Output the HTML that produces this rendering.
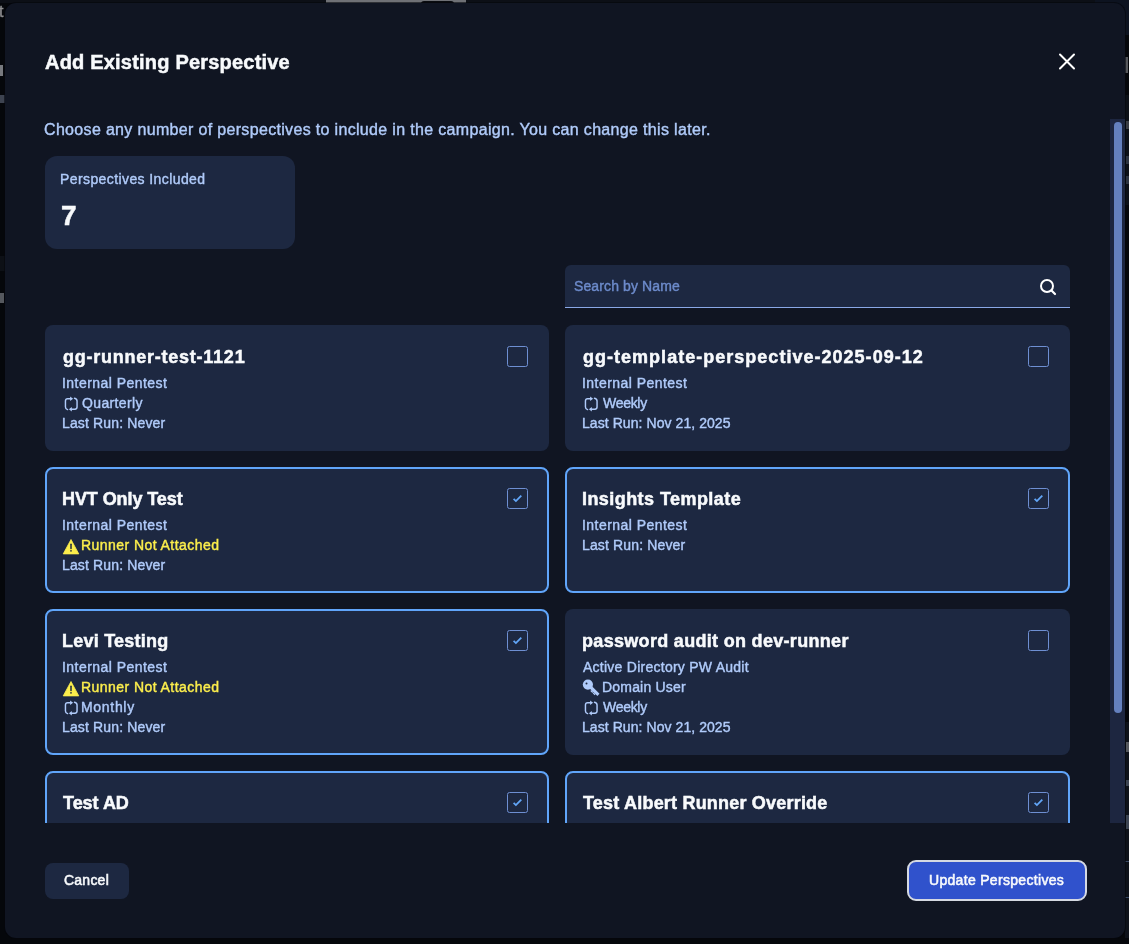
<!DOCTYPE html>
<html><head><meta charset="utf-8">
<style>
html,body{margin:0;padding:0;width:1129px;height:944px;overflow:hidden;background:#0b0e15;}
body{position:relative;font-family:"Liberation Sans",sans-serif;}
.t{position:absolute;white-space:nowrap;will-change:transform;}
.ic{position:absolute;overflow:visible;}
.modal{position:absolute;left:5px;top:3px;width:1120px;height:935px;background:#101522;border-radius:11px;box-shadow:0 0 0 1px rgba(5,7,11,0.6);overflow:hidden;}
.scroll{position:absolute;left:0;top:116px;width:1105px;height:704px;overflow:hidden;}
.inner{position:absolute;left:0;top:-116px;width:1120px;height:944px;}
.card{position:absolute;left:0;width:504.5px;background:#1d2841;border-radius:8px;box-sizing:border-box;}
.card.sel{border:2px solid #60a5fa;}
.cb{position:absolute;width:21px;height:21px;box-sizing:border-box;border:1.5px solid #6e8fd2;border-radius:2.5px;}
</style></head><body>
<div style="position:absolute;left:0;top:0;width:1129px;height:944px;background:#05070b;"></div>
<div style="position:absolute;left:0;top:0;width:1129px;height:3px;background:#0c0f16;"></div>
<div style="position:absolute;left:326px;top:0;width:140px;height:3px;background:#6f7176;border-radius:0 0 0 0;"></div>
<div style="position:absolute;left:421px;top:1px;width:33px;height:3px;background:#0a0c10;border-radius:6px 6px 0 0;"></div>

<div style="position:absolute;left:-1px;top:2px;font-family:'Liberation Sans',sans-serif;font-size:16px;line-height:20px;color:#8d8d8f;will-change:transform;-webkit-text-stroke:0.4px #8d8d8f">t</div>
<div style="position:absolute;left:0;top:65px;width:3px;height:11px;background:#77797e;"></div>
<div style="position:absolute;left:0;top:95px;width:5px;height:8px;background:#3d4350;"></div>
<div style="position:absolute;left:0;top:256px;width:5px;height:15px;background:#0d1016;"></div>
<div style="position:absolute;left:0;top:293px;width:4px;height:10px;background:#55585e;"></div>
<div style="position:absolute;left:1095px;top:0;width:34px;height:35px;background:#0d1320;"></div>
<div style="position:absolute;left:1125px;top:57px;width:3px;height:16px;background:#55575c;"></div>
<div style="position:absolute;left:1125px;top:95px;width:4px;height:110px;background:#0c1017;"></div>
<div style="position:absolute;left:1126px;top:121px;width:3px;height:8px;background:#3a3d44;"></div>
<div style="position:absolute;left:1126px;top:156px;width:3px;height:8px;background:#2c3340;"></div>
<div style="position:absolute;left:1126px;top:176px;width:3px;height:8px;background:#2c3340;"></div>
<div style="position:absolute;left:1125px;top:722px;width:4px;height:216px;background:#0e121a;"></div>
<div style="position:absolute;left:1126px;top:742px;width:3px;height:10px;background:#55585e;"></div>
<div style="position:absolute;left:1126px;top:780px;width:3px;height:6px;background:#3c4452;"></div>
<div style="position:absolute;left:1126px;top:815px;width:3px;height:14px;background:#3c4452;"></div>
<div style="position:absolute;left:1125px;top:861px;width:4px;height:1px;background:#3a4a66;"></div>
<div style="position:absolute;left:1125px;top:897px;width:4px;height:1px;background:#3a4a66;"></div>

<div class="modal">
  <div class="modal-rel" style="position:absolute;left:-5px;top:-3px;width:1129px;height:944px;">
  <div class="t" id="t27" style="left:44.90px;top:49.87px;font-size:20px;line-height:25px;color:#f8fafc;font-weight:700;-webkit-text-stroke:0.5px #f8fafc;letter-spacing:0.203px;">Add Existing Perspective</div>
  <svg class="ic" style="left:1058px;top:53px" width="18" height="18" viewBox="0 0 18 18">
    <path d="M2 1.5 L16 15.5 M16 1.5 L2 15.5" stroke="#ffffff" stroke-width="2" stroke-linecap="round"/>
  </svg>
  <div style="position:absolute;left:0;top:119px;width:1105px;height:704px;overflow:hidden;">
   <div style="position:absolute;left:0;top:-119px;width:1129px;height:944px;">
  <div class="t" id="t28" style="left:44.14px;top:120.26px;font-size:16px;line-height:20px;color:#b0cbfa;-webkit-text-stroke:0.4px #b0cbfa;letter-spacing:0.329px;">Choose any number of perspectives to include in the campaign. You can change this later.</div>
  <div style="position:absolute;left:45px;top:156px;width:250px;height:92.5px;background:#1d2841;border-radius:12px;"></div>
  <div class="t" id="t29" style="left:60.19px;top:169.95px;font-size:14px;line-height:18px;color:#b0cbfa;-webkit-text-stroke:0.4px #b0cbfa;letter-spacing:0.406px;">Perspectives Included</div>
  <div class="t" id="t30" style="left:61.00px;top:198.10px;font-size:28px;line-height:35px;color:#f8fafc;font-weight:700;-webkit-text-stroke:0.5px #f8fafc;letter-spacing:0.000px;">7</div>
  <div style="position:absolute;left:565px;top:265px;width:505px;height:43px;background:#1d2841;border-radius:6px 6px 0 0;box-sizing:border-box;border-bottom:1.5px solid #8aa8e6;"></div>
  <div class="t" id="t31" style="left:574.25px;top:277.05px;font-size:14px;line-height:18px;color:#6d8bcb;-webkit-text-stroke:0.4px #6d8bcb;letter-spacing:0.120px;">Search by Name</div>
  <svg class="ic" style="left:1038px;top:277px" width="20" height="20" viewBox="0 0 20 20">
    <circle cx="9" cy="9" r="6" fill="none" stroke="#ffffff" stroke-width="2"/>
    <path d="M13.5 13.5 L17 17" stroke="#ffffff" stroke-width="2.2" stroke-linecap="round"/>
  </svg>
  <div class="card" style="left:45px;top:325px;height:126px;width:504.2px"></div>
<div class="t" id="t0" style="left:62.70px;top:345.76px;font-size:18px;line-height:22px;color:#f8fafc;font-weight:700;-webkit-text-stroke:0.5px #f8fafc;letter-spacing:0.756px;">gg-runner-test-1121</div>
<div class="cb" style="left:507px;top:346px"></div>
<div class="t" id="t1" style="left:61.64px;top:374.15px;font-size:14px;line-height:18px;color:#b0cbfa;-webkit-text-stroke:0.4px #b0cbfa;letter-spacing:0.460px;">Internal Pentest</div>
<svg class="ic" style="left:64.0px;top:396px" width="16" height="18" viewBox="0 0 16 18">
<path d="M6.6 2.75 H3.6 Q1.45 2.75 1.45 4.9 V10.9 Q1.45 12.9 3.6 13.6" fill="none" stroke="#b0cbfa" stroke-width="1.45" stroke-linecap="round"/>
<path d="M6.1 0.5 L9.1 2.75 L6.1 5 Z" fill="#b0cbfa"/>
<path d="M10.5 2.3 Q13.05 2.9 13.05 5.0 V11.1 Q13.05 13.2 10.9 13.2 H7.2" fill="none" stroke="#b0cbfa" stroke-width="1.45" stroke-linecap="round"/>
<path d="M7.8 11.0 L4.9 13.2 L7.8 15.4 Z" fill="#b0cbfa"/>
</svg>
<div class="t" id="t2" style="left:81.97px;top:394.15px;font-size:14px;line-height:18px;color:#b0cbfa;-webkit-text-stroke:0.4px #b0cbfa;letter-spacing:0.356px;">Quarterly</div>
<div class="t" id="t3" style="left:61.79px;top:414.15px;font-size:14px;line-height:18px;color:#b0cbfa;-webkit-text-stroke:0.4px #b0cbfa;letter-spacing:0.145px;">Last Run: Never</div>
<div class="card" style="left:565px;top:325px;height:126px;width:505px"></div>
<div class="t" id="t4" style="left:583.00px;top:345.76px;font-size:18px;line-height:22px;color:#f8fafc;font-weight:700;-webkit-text-stroke:0.5px #f8fafc;letter-spacing:1.019px;">gg-template-perspective-2025-09-12</div>
<div class="cb" style="left:1028px;top:346px"></div>
<div class="t" id="t5" style="left:581.94px;top:374.15px;font-size:14px;line-height:18px;color:#b0cbfa;-webkit-text-stroke:0.4px #b0cbfa;letter-spacing:0.460px;">Internal Pentest</div>
<svg class="ic" style="left:583.7px;top:396px" width="16" height="18" viewBox="0 0 16 18">
<path d="M6.6 2.75 H3.6 Q1.45 2.75 1.45 4.9 V10.9 Q1.45 12.9 3.6 13.6" fill="none" stroke="#b0cbfa" stroke-width="1.45" stroke-linecap="round"/>
<path d="M6.1 0.5 L9.1 2.75 L6.1 5 Z" fill="#b0cbfa"/>
<path d="M10.5 2.3 Q13.05 2.9 13.05 5.0 V11.1 Q13.05 13.2 10.9 13.2 H7.2" fill="none" stroke="#b0cbfa" stroke-width="1.45" stroke-linecap="round"/>
<path d="M7.8 11.0 L4.9 13.2 L7.8 15.4 Z" fill="#b0cbfa"/>
</svg>
<div class="t" id="t6" style="left:603.26px;top:394.15px;font-size:14px;line-height:18px;color:#b0cbfa;-webkit-text-stroke:0.4px #b0cbfa;letter-spacing:-0.297px;">Weekly</div>
<div class="t" id="t7" style="left:582.09px;top:414.15px;font-size:14px;line-height:18px;color:#b0cbfa;-webkit-text-stroke:0.4px #b0cbfa;letter-spacing:0.067px;">Last Run: Nov 21, 2025</div>
<div class="card sel" style="left:45px;top:467px;height:126px;width:504.2px"></div>
<div class="t" id="t8" style="left:61.76px;top:487.76px;font-size:18px;line-height:22px;color:#f8fafc;font-weight:700;-webkit-text-stroke:0.5px #f8fafc;letter-spacing:-0.081px;">HVT Only Test</div>
<div class="cb" style="left:507px;top:488px"></div><svg class="ic" style="left:507px;top:488px" width="21" height="21" viewBox="0 0 21 21">
<path d="M6.6 10.9 L8.9 13.1 L14.3 7.6" fill="none" stroke="#62a6f8" stroke-width="1.8"/></svg>
<div class="t" id="t9" style="left:61.64px;top:516.15px;font-size:14px;line-height:18px;color:#b0cbfa;-webkit-text-stroke:0.4px #b0cbfa;letter-spacing:0.460px;">Internal Pentest</div>
<svg class="ic" style="left:62.0px;top:537.5px" width="18" height="18" viewBox="0 0 18 18">
<path d="M9 1.5 L16.8 15.9 H1.2 Z" fill="#fcee4c" stroke="#fcee4c" stroke-width="0.8" stroke-linejoin="round"/>
<path d="M9 6.2 V10.4" stroke="#1d2841" stroke-width="1.5" stroke-linecap="round"/>
<circle cx="9" cy="12.8" r="0.85" fill="#1d2841"/>
</svg>
<div class="t" id="t10" style="left:81.28px;top:536.15px;font-size:14px;line-height:18px;color:#fcee4c;-webkit-text-stroke:0.4px #fcee4c;letter-spacing:0.443px;">Runner Not Attached</div>
<div class="t" id="t11" style="left:61.79px;top:556.15px;font-size:14px;line-height:18px;color:#b0cbfa;-webkit-text-stroke:0.4px #b0cbfa;letter-spacing:0.145px;">Last Run: Never</div>
<div class="card sel" style="left:565px;top:467px;height:126px;width:505px"></div>
<div class="t" id="t12" style="left:582.06px;top:487.76px;font-size:18px;line-height:22px;color:#f8fafc;font-weight:700;-webkit-text-stroke:0.5px #f8fafc;letter-spacing:0.435px;">Insights Template</div>
<div class="cb" style="left:1028px;top:488px"></div><svg class="ic" style="left:1028px;top:488px" width="21" height="21" viewBox="0 0 21 21">
<path d="M6.6 10.9 L8.9 13.1 L14.3 7.6" fill="none" stroke="#62a6f8" stroke-width="1.8"/></svg>
<div class="t" id="t13" style="left:581.94px;top:516.15px;font-size:14px;line-height:18px;color:#b0cbfa;-webkit-text-stroke:0.4px #b0cbfa;letter-spacing:0.460px;">Internal Pentest</div>
<div class="t" id="t14" style="left:582.09px;top:536.15px;font-size:14px;line-height:18px;color:#b0cbfa;-webkit-text-stroke:0.4px #b0cbfa;letter-spacing:0.145px;">Last Run: Never</div>
<div class="card sel" style="left:45px;top:609px;height:146px;width:504.2px"></div>
<div class="t" id="t15" style="left:61.76px;top:629.76px;font-size:18px;line-height:22px;color:#f8fafc;font-weight:700;-webkit-text-stroke:0.5px #f8fafc;letter-spacing:0.223px;">Levi Testing</div>
<div class="cb" style="left:507px;top:630px"></div><svg class="ic" style="left:507px;top:630px" width="21" height="21" viewBox="0 0 21 21">
<path d="M6.6 10.9 L8.9 13.1 L14.3 7.6" fill="none" stroke="#62a6f8" stroke-width="1.8"/></svg>
<div class="t" id="t16" style="left:61.64px;top:658.15px;font-size:14px;line-height:18px;color:#b0cbfa;-webkit-text-stroke:0.4px #b0cbfa;letter-spacing:0.460px;">Internal Pentest</div>
<svg class="ic" style="left:62.0px;top:679.5px" width="18" height="18" viewBox="0 0 18 18">
<path d="M9 1.5 L16.8 15.9 H1.2 Z" fill="#fcee4c" stroke="#fcee4c" stroke-width="0.8" stroke-linejoin="round"/>
<path d="M9 6.2 V10.4" stroke="#1d2841" stroke-width="1.5" stroke-linecap="round"/>
<circle cx="9" cy="12.8" r="0.85" fill="#1d2841"/>
</svg>
<div class="t" id="t17" style="left:81.28px;top:678.15px;font-size:14px;line-height:18px;color:#fcee4c;-webkit-text-stroke:0.4px #fcee4c;letter-spacing:0.443px;">Runner Not Attached</div>
<svg class="ic" style="left:64.0px;top:700px" width="16" height="18" viewBox="0 0 16 18">
<path d="M6.6 2.75 H3.6 Q1.45 2.75 1.45 4.9 V10.9 Q1.45 12.9 3.6 13.6" fill="none" stroke="#b0cbfa" stroke-width="1.45" stroke-linecap="round"/>
<path d="M6.1 0.5 L9.1 2.75 L6.1 5 Z" fill="#b0cbfa"/>
<path d="M10.5 2.3 Q13.05 2.9 13.05 5.0 V11.1 Q13.05 13.2 10.9 13.2 H7.2" fill="none" stroke="#b0cbfa" stroke-width="1.45" stroke-linecap="round"/>
<path d="M7.8 11.0 L4.9 13.2 L7.8 15.4 Z" fill="#b0cbfa"/>
</svg>
<div class="t" id="t18" style="left:81.27px;top:698.15px;font-size:14px;line-height:18px;color:#b0cbfa;-webkit-text-stroke:0.4px #b0cbfa;letter-spacing:0.691px;">Monthly</div>
<div class="t" id="t19" style="left:61.79px;top:718.15px;font-size:14px;line-height:18px;color:#b0cbfa;-webkit-text-stroke:0.4px #b0cbfa;letter-spacing:0.145px;">Last Run: Never</div>
<div class="card" style="left:565px;top:609px;height:146px;width:505px"></div>
<div class="t" id="t20" style="left:582.04px;top:629.76px;font-size:18px;line-height:22px;color:#f8fafc;font-weight:700;-webkit-text-stroke:0.5px #f8fafc;letter-spacing:0.311px;">password audit on dev-runner</div>
<div class="cb" style="left:1028px;top:630px"></div>
<div class="t" id="t21" style="left:583.02px;top:658.15px;font-size:14px;line-height:18px;color:#b0cbfa;-webkit-text-stroke:0.4px #b0cbfa;letter-spacing:0.255px;">Active Directory PW Audit</div>
<svg class="ic" style="left:577.7px;top:674px" width="24" height="24" viewBox="0 0 24 24">
<circle cx="9.9" cy="10.6" r="5.1" fill="#b0cbfa"/>
<circle cx="8.5" cy="9.4" r="1.0" fill="#1d2841"/>
<path d="M11.6 14.6 L14.0 12.2 L21.5 19.7 L19.4 22.0 Z" fill="#b0cbfa"/>
<path d="M13.2 16.0 L15.3 18.1 L14.4 19.0 L12.3 16.9 Z M15.6 18.4 L17.5 20.3 L16.6 21.2 L14.7 19.3 Z" fill="#b0cbfa"/>
</svg>
<div class="t" id="t22" style="left:602.26px;top:678.15px;font-size:14px;line-height:18px;color:#b0cbfa;-webkit-text-stroke:0.4px #b0cbfa;letter-spacing:0.192px;">Domain User</div>
<svg class="ic" style="left:583.7px;top:700px" width="16" height="18" viewBox="0 0 16 18">
<path d="M6.6 2.75 H3.6 Q1.45 2.75 1.45 4.9 V10.9 Q1.45 12.9 3.6 13.6" fill="none" stroke="#b0cbfa" stroke-width="1.45" stroke-linecap="round"/>
<path d="M6.1 0.5 L9.1 2.75 L6.1 5 Z" fill="#b0cbfa"/>
<path d="M10.5 2.3 Q13.05 2.9 13.05 5.0 V11.1 Q13.05 13.2 10.9 13.2 H7.2" fill="none" stroke="#b0cbfa" stroke-width="1.45" stroke-linecap="round"/>
<path d="M7.8 11.0 L4.9 13.2 L7.8 15.4 Z" fill="#b0cbfa"/>
</svg>
<div class="t" id="t23" style="left:603.26px;top:698.15px;font-size:14px;line-height:18px;color:#b0cbfa;-webkit-text-stroke:0.4px #b0cbfa;letter-spacing:-0.297px;">Weekly</div>
<div class="t" id="t24" style="left:582.09px;top:718.15px;font-size:14px;line-height:18px;color:#b0cbfa;-webkit-text-stroke:0.4px #b0cbfa;letter-spacing:0.067px;">Last Run: Nov 21, 2025</div>
<div class="card sel" style="left:45px;top:771px;height:146px;width:504.2px"></div>
<div class="t" id="t25" style="left:62.76px;top:791.76px;font-size:18px;line-height:22px;color:#f8fafc;font-weight:700;-webkit-text-stroke:0.5px #f8fafc;letter-spacing:-0.026px;">Test AD</div>
<div class="cb" style="left:507px;top:792px"></div><svg class="ic" style="left:507px;top:792px" width="21" height="21" viewBox="0 0 21 21">
<path d="M6.6 10.9 L8.9 13.1 L14.3 7.6" fill="none" stroke="#62a6f8" stroke-width="1.8"/></svg>
<div class="card sel" style="left:565px;top:771px;height:146px;width:505px"></div>
<div class="t" id="t26" style="left:583.06px;top:791.76px;font-size:18px;line-height:22px;color:#f8fafc;font-weight:700;-webkit-text-stroke:0.5px #f8fafc;letter-spacing:0.203px;">Test Albert Runner Override</div>
<div class="cb" style="left:1028px;top:792px"></div><svg class="ic" style="left:1028px;top:792px" width="21" height="21" viewBox="0 0 21 21">
<path d="M6.6 10.9 L8.9 13.1 L14.3 7.6" fill="none" stroke="#62a6f8" stroke-width="1.8"/></svg>
   </div>
  </div>
  <div style="position:absolute;left:1110px;top:119px;width:15px;height:703.5px;background:#1d2640;"></div>
  <div style="position:absolute;left:1114px;top:122px;width:8px;height:590.5px;background:#6480be;border-radius:4px;"></div>
  <div style="position:absolute;left:45px;top:862.5px;width:84px;height:36px;background:#1d2841;border-radius:8px;"></div>
  <div class="t" id="t32" style="left:64.29px;top:871.05px;font-size:14px;line-height:18px;color:#f8fafc;-webkit-text-stroke:0.55px #f8fafc;letter-spacing:0.233px;">Cancel</div>
  <div style="position:absolute;left:907px;top:860px;width:180px;height:41px;box-sizing:border-box;background:#3052cc;border:2px solid #d5d9e2;border-radius:9px;"></div>
  <div class="t" id="t33" style="left:929.45px;top:871.05px;font-size:14px;line-height:18px;color:#f8fafc;-webkit-text-stroke:0.55px #f8fafc;letter-spacing:0.312px;">Update Perspectives</div>
  </div>
</div>
</body></html>
